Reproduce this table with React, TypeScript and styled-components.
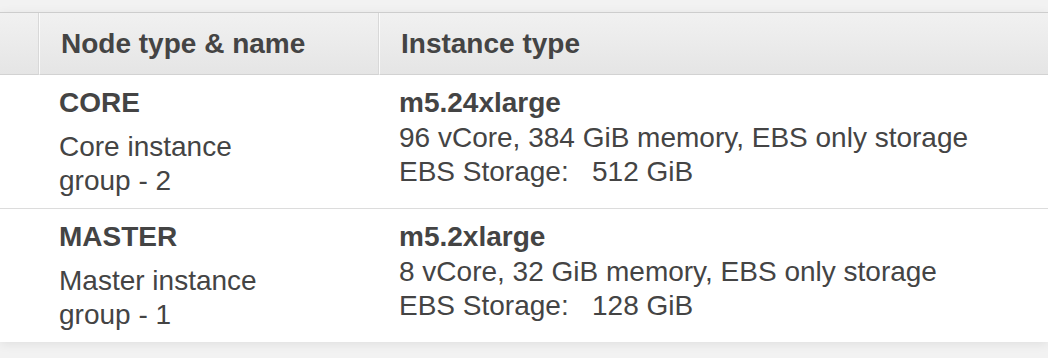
import React from "react";
import styled, { createGlobalStyle } from "styled-components";

const Global = createGlobalStyle`
  html, body { margin: 0; padding: 0; background: #f2f2f2; }
  body { font-family: "Liberation Sans", Arial, Helvetica, sans-serif; color: #444; }
`;

const Page = styled.div`
  width: 1048px;
  height: 358px;
  padding-top: 12px;
  box-sizing: border-box;
  background: #f2f2f2;
  overflow: hidden;
`;

const Table = styled.div`
  display: grid;
  grid-template-columns: 39px 340px 1fr;
  background: #fff;
  border-top: 1px solid #cdcdcd;
  box-shadow: 0 2px 10px rgba(0, 0, 0, 0.08);
`;

const HeadCell = styled.div<{ $first?: boolean; $last?: boolean }>`
  height: 61px;
  line-height: 61px;
  background: linear-gradient(#f1f1f1, #e5e5e5);
  border-bottom: 1px solid #d2d2d2;
  border-left: ${(p) => (p.$first ? "none" : "1px solid #fbfbfb")};
  border-right: ${(p) => (p.$last ? "none" : "1px solid #d8d8d8")};
  padding-left: ${(p) => (p.$first ? "0" : "21px")};
  font-size: 28px;
  font-weight: bold;
  color: #444;
  white-space: nowrap;
`;

const Cell = styled.div<{ $divider?: boolean }>`
  padding: 10px 0 10px 20px;
  border-top: ${(p) => (p.$divider ? "1px solid #dcdcdc" : "none")};
  font-size: 28px;
  color: #444;
`;

const Spacer = styled(Cell)`
  padding-left: 0;
`;

const Title = styled.div`
  font-weight: bold;
  line-height: 36px;
`;

const Desc = styled.div`
  margin-top: 9px;
  line-height: 34px;
  width: 225px;
`;

const Line = styled.div`
  line-height: 34px;
  white-space: pre;
`;

const rows = [
  {
    type: "CORE",
    name: "Core instance group - 2",
    inst: "m5.24xlarge",
    spec: "96 vCore, 384 GiB memory, EBS only storage",
    storage: "EBS Storage:   512 GiB",
  },
  {
    type: "MASTER",
    name: "Master instance group - 1",
    inst: "m5.2xlarge",
    spec: "8 vCore, 32 GiB memory, EBS only storage",
    storage: "EBS Storage:   128 GiB",
  },
];

export default function App() {
  return (
    <Page>
      <Global />
      <Table>
        <HeadCell $first />
        <HeadCell>Node type &amp; name</HeadCell>
        <HeadCell $last>Instance type</HeadCell>
        {rows.map((r, i) => (
          <React.Fragment key={r.type}>
            <Spacer $divider={i > 0} />
            <Cell $divider={i > 0}>
              <Title>{r.type}</Title>
              <Desc>{r.name}</Desc>
            </Cell>
            <Cell $divider={i > 0}>
              <Title>{r.inst}</Title>
              <Line>{r.spec}</Line>
              <Line>{r.storage}</Line>
            </Cell>
          </React.Fragment>
        ))}
      </Table>
    </Page>
  );
}
